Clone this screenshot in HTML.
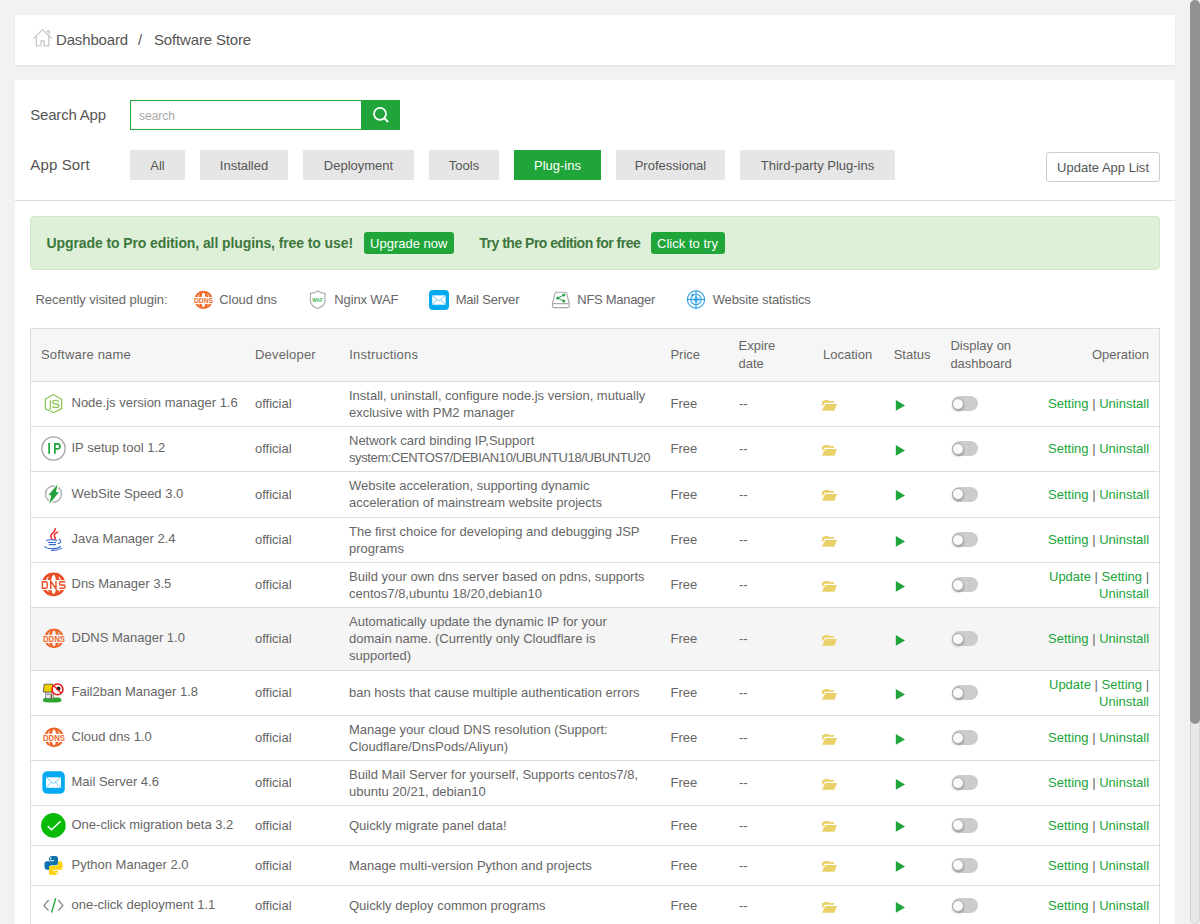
<!DOCTYPE html><html><head><meta charset="utf-8"><style>
html,body{margin:0;padding:0}
body{width:1200px;height:924px;overflow:hidden;background:#f2f2f2;position:relative;font-family:"Liberation Sans",sans-serif}
.t{position:absolute;white-space:nowrap}
.r{position:absolute;box-sizing:border-box}
.i{position:absolute;overflow:visible}
</style></head><body>
<div class="r" style="left:15px;top:15px;width:1160px;height:50px;background:#fff;box-shadow:0 1px 2px rgba(0,0,0,0.08)"></div>
<svg class="i" style="left:28px;top:24px" width="30" height="30" viewBox="0 0 30 30"><g fill="none" stroke="#c8c8c8" stroke-width="1.3" stroke-linejoin="round"><path d="M5.4 14.6 L14.4 5.6 L23.9 14.6"/><path d="M8.4 12 V21.8 H13 V17 H16.2 V21.8 H20.8 V12"/><path d="M19.2 8.6 V6.8 H21.2 V10.6"/></g></svg>
<div class="t" style="left:56.0px;top:29.80px;font-size:15px;line-height:20px;color:#555;letter-spacing:-0.153px;">Dashboard</div>
<div class="t" style="left:138.0px;top:29.80px;font-size:15px;line-height:20px;color:#555;">/</div>
<div class="t" style="left:154.0px;top:29.80px;font-size:15px;line-height:20px;color:#555;letter-spacing:-0.158px;">Software Store</div>
<div class="r" style="left:15px;top:80px;width:1160px;height:860px;background:#fff"></div>
<div class="t" style="left:30.3px;top:104.80px;font-size:15px;line-height:20px;color:#555;letter-spacing:-0.205px;">Search App</div>
<div class="r" style="left:130px;top:100px;width:232px;height:30px;border:1px solid #20a53a;border-right:none;background:#fff"></div>
<div class="t" style="left:139.0px;top:107.84px;font-size:12px;line-height:16px;color:#aaa;letter-spacing:-0.003px;">search</div>
<div class="r" style="left:361px;top:100px;width:39px;height:30px;background:#20a53a"></div>
<svg class="i" style="left:361px;top:100px" width="39" height="30" viewBox="0 0 39 30"><g fill="none" stroke="#fff" stroke-width="1.8"><circle cx="19" cy="13.8" r="6"/><path d="M23.2 18 L27.2 22" stroke-linecap="butt"/></g></svg>
<div class="t" style="left:30.3px;top:154.80px;font-size:15px;line-height:20px;color:#555;letter-spacing:0.142px;">App Sort</div>
<div class="r" style="left:130px;top:150px;width:55px;height:30px;background:#e6e6e6"></div>
<div class="t" style="left:150.3px;top:156.60px;font-size:13px;line-height:17px;color:#555;">All</div>
<div class="r" style="left:200px;top:150px;width:88px;height:30px;background:#e6e6e6"></div>
<div class="t" style="left:219.8px;top:156.60px;font-size:13px;line-height:17px;color:#555;">Installed</div>
<div class="r" style="left:303px;top:150px;width:111px;height:30px;background:#e6e6e6"></div>
<div class="t" style="left:323.8px;top:156.60px;font-size:13px;line-height:17px;color:#555;">Deployment</div>
<div class="r" style="left:429px;top:150px;width:70px;height:30px;background:#e6e6e6"></div>
<div class="t" style="left:448.8px;top:156.60px;font-size:13px;line-height:17px;color:#555;">Tools</div>
<div class="r" style="left:514px;top:150px;width:87px;height:30px;background:#20a53a"></div>
<div class="t" style="left:534.0px;top:156.60px;font-size:13px;line-height:17px;color:#fff;">Plug-ins</div>
<div class="r" style="left:616px;top:150px;width:109px;height:30px;background:#e6e6e6"></div>
<div class="t" style="left:634.7px;top:156.60px;font-size:13px;line-height:17px;color:#555;">Professional</div>
<div class="r" style="left:740px;top:150px;width:155px;height:30px;background:#e6e6e6"></div>
<div class="t" style="left:760.8px;top:156.60px;font-size:13px;line-height:17px;color:#555;">Third-party Plug-ins</div>
<div class="r" style="left:1046px;top:152px;width:114px;height:30px;border:1px solid #ccc;border-radius:3px;background:#fff"></div>
<div class="t" style="left:1057.0px;top:158.50px;font-size:13px;line-height:17px;color:#555;letter-spacing:0.015px;">Update App List</div>
<div class="r" style="left:15px;top:200px;width:1160px;height:1px;background:#ddd"></div>
<div class="r" style="left:30px;top:216px;width:1130px;height:54px;background:#dff0d8;border:1px solid #d0e9c6;border-radius:4px"></div>
<div class="t" style="left:46.5px;top:233.65px;font-size:14px;line-height:18px;color:#3c763d;font-weight:bold;letter-spacing:-0.094px;">Upgrade to Pro edition, all plugins, free to use!</div>
<div class="r" style="left:364px;top:232px;width:90px;height:22px;background:#20a53a;border-radius:3px"></div>
<div class="t" style="left:370.0px;top:234.50px;font-size:13px;line-height:17px;color:#fff;letter-spacing:0.016px;">Upgrade now</div>
<div class="t" style="left:479.3px;top:233.65px;font-size:14px;line-height:18px;color:#3c763d;font-weight:bold;letter-spacing:-0.501px;">Try the Pro edition for free</div>
<div class="r" style="left:651px;top:232px;width:74px;height:22px;background:#20a53a;border-radius:3px"></div>
<div class="t" style="left:657.0px;top:234.50px;font-size:13px;line-height:17px;color:#fff;letter-spacing:0.028px;">Click to try</div>
<div class="t" style="left:35.5px;top:291.20px;font-size:13px;line-height:17px;color:#666;letter-spacing:-0.040px;">Recently visited plugin:</div>
<div class="t" style="left:219.3px;top:291.20px;font-size:13px;line-height:17px;color:#666;letter-spacing:-0.093px;">Cloud dns</div>
<div class="t" style="left:334.3px;top:291.20px;font-size:13px;line-height:17px;color:#666;letter-spacing:-0.139px;">Nginx WAF</div>
<div class="t" style="left:455.7px;top:291.20px;font-size:13px;line-height:17px;color:#666;letter-spacing:-0.194px;">Mail Server</div>
<div class="t" style="left:577.3px;top:291.20px;font-size:13px;line-height:17px;color:#666;letter-spacing:-0.292px;">NFS Manager</div>
<div class="t" style="left:712.7px;top:291.20px;font-size:13px;line-height:17px;color:#666;letter-spacing:-0.121px;">Website statistics</div>
<svg class="i" style="left:188px;top:285px" width="30" height="30" viewBox="0 0 30 30"><defs><mask id="mddns3"><rect width="30" height="30" fill="#fff"/>
<ellipse cx="15.5" cy="14.9" rx="5.64" ry="9.28" fill="none" stroke="#000" stroke-width="0.91"/>
<ellipse cx="15.5" cy="14.9" rx="2.00" ry="7.64" fill="#000"/>
<rect x="0" y="11.9" width="30" height="6.999999999999998" fill="#000"/></mask></defs>
<circle cx="15.5" cy="14.9" r="9.1" fill="#f06a2a" mask="url(#mddns3)"/><clipPath id="kddns3"><rect x="0" y="0" width="30" height="11.9"/><rect x="0" y="18.9" width="30" height="30"/></clipPath><circle cx="15.5" cy="14.9" r="8.19" fill="none" stroke="#f06a2a" stroke-width="1.82" clip-path="url(#kddns3)"/><text x="15.5" y="18.1" text-anchor="middle" font-family="Liberation Sans" font-weight="bold" font-size="7.4" fill="#f06a2a" textLength="19.2" lengthAdjust="spacingAndGlyphs">DDNS</text></svg>
<svg class="i" style="left:303px;top:285px" width="30" height="30" viewBox="0 0 30 30"><path d="M14.7 6 Q11 8.4 7.4 8.4 V15.5 Q7.4 21 14.7 23.4 Q22 21 22 15.5 V8.4 Q18.4 8.4 14.7 6 Z" fill="none" stroke="#a8a8a8" stroke-width="1.1"/><text x="14.6" y="17" text-anchor="middle" font-family="Liberation Sans" font-weight="bold" font-size="5.2" fill="#3cb55a" textLength="10.5" lengthAdjust="spacingAndGlyphs">WAF</text></svg>
<svg class="i" style="left:424px;top:285px" width="30" height="30" viewBox="0 0 30 30"><rect x="5" y="5" width="20" height="20" rx="4" fill="#03a9f1"/><rect x="8.21" y="10.36" width="13.39" height="9.38" fill="#fff"/><path d="M8.21 10.36 L14.91 15.89 L21.61 10.36 M8.21 19.73 L13.04 14.64 M21.61 19.73 L16.79 14.64" fill="none" stroke="#3ab6ee" stroke-width="0.7"/></svg>
<svg class="i" style="left:546px;top:285px" width="30" height="30" viewBox="0 0 30 30"><g fill="none" stroke="#a8a8a8" stroke-width="1.1"><path d="M6.4 19 L9 8.2 Q9.2 7.3 10.2 7.3 H19.4 Q20.4 7.3 20.6 8.2 L23.4 19"/><rect x="6.4" y="18.6" width="17" height="4" rx="1.6"/></g><g fill="#2ea44a"><circle cx="11.8" cy="13" r="1.6"/><circle cx="17.8" cy="10" r="1.6"/><circle cx="17.8" cy="16" r="1.6"/></g><path d="M11.8 13 L17.8 10 M11.8 13 L17.8 16" stroke="#2ea44a" stroke-width="1"/></svg>
<svg class="i" style="left:681px;top:285px" width="30" height="30" viewBox="0 0 30 30"><g fill="none" stroke="#2a9ee4" stroke-width="1.1"><circle cx="15" cy="14.5" r="8.6"/><circle cx="15" cy="14.5" r="5.2"/><path d="M15 5.5 V23.5 M7 14.5 H23"/></g><path d="M15 11 L19.6 14.5 L15 18 L11.6 14.5 Z" fill="#2a9ee4" opacity="0.6"/><circle cx="11.6" cy="10" r="1.3" fill="#2a9ee4"/></svg>
<div class="r" style="left:30px;top:328px;width:1130px;height:54px;background:#f6f6f6;border:1px solid #ddd;border-bottom:1px solid #ddd"></div>
<div class="t" style="left:41.0px;top:346.00px;font-size:13px;line-height:17px;color:#666;letter-spacing:0.198px;">Software name</div>
<div class="t" style="left:255.0px;top:346.00px;font-size:13px;line-height:17px;color:#666;letter-spacing:0.172px;">Developer</div>
<div class="t" style="left:349.2px;top:346.00px;font-size:13px;line-height:17px;color:#666;letter-spacing:0.211px;">Instructions</div>
<div class="t" style="left:670.4px;top:346.00px;font-size:13px;line-height:17px;color:#666;">Price</div>
<div class="t" style="left:738.5px;top:337.00px;font-size:13px;line-height:17px;color:#666;">Expire</div>
<div class="t" style="left:738.5px;top:354.50px;font-size:13px;line-height:17px;color:#666;">date</div>
<div class="t" style="left:823.0px;top:346.00px;font-size:13px;line-height:17px;color:#666;">Location</div>
<div class="t" style="left:893.7px;top:346.00px;font-size:13px;line-height:17px;color:#666;">Status</div>
<div class="t" style="left:950.4px;top:337.00px;font-size:13px;line-height:17px;color:#666;">Display on</div>
<div class="t" style="left:950.4px;top:354.50px;font-size:13px;line-height:17px;color:#666;">dashboard</div>
<div class="t" style="left:1091.9px;top:346.00px;font-size:13px;line-height:17px;color:#666;">Operation</div>
<div style="position:absolute;left:0;top:0;width:1200px;height:924px;overflow:hidden">
<div class="r" style="left:30px;top:382px;width:1130px;height:45px;background:#fff;border-left:1px solid #ddd;border-right:1px solid #ddd;border-bottom:1px solid #ddd"></div>
<svg class="i" style="left:38px;top:388px" width="30" height="30" viewBox="0 0 30 30"><g fill="none" stroke="#80bd41" stroke-width="1.1"><path d="M12.6 23 L15.4 24.7 L23.7 20.6 V11.2 L15.4 6.6 L7.3 11 V20.6 L9.6 22"/><path d="M12.3 12.2 V20.6 Q12.3 22.6 10.2 22.3 L9.6 22"/><path d="M20.7 14 Q20.3 12.3 17.6 12.3 Q14.6 12.3 14.6 14 Q14.6 15.6 17.6 15.9 Q21 16.2 21 17.8 Q21 19.6 17.6 19.6 Q14.8 19.6 14.3 17.8"/></g></svg>
<div class="t" style="left:71.5px;top:394.00px;font-size:13px;line-height:17px;color:#666;">Node.js version manager 1.6</div>
<div class="t" style="left:255.0px;top:395.00px;font-size:13px;line-height:17px;color:#666;">official</div>
<div class="t" style="left:349.0px;top:386.70px;font-size:13px;line-height:17px;color:#666;">Install, uninstall, configure node.js version, mutually</div>
<div class="t" style="left:349.0px;top:403.70px;font-size:13px;line-height:17px;color:#666;">exclusive with PM2 manager</div>
<div class="t" style="left:670.5px;top:395.00px;font-size:13px;line-height:17px;color:#666;">Free</div>
<div class="t" style="left:739.0px;top:395.00px;font-size:13px;line-height:17px;color:#666;">--</div>
<svg class="i" style="left:815px;top:390px" width="30" height="30" viewBox="0 0 30 30"><path d="M7 11 H9.1 L9.6 10 H13.8 L14.3 11 H19 V12.7 H10 L7.2 16.6 Z" fill="#ead069"/><path d="M10.2 14 H22 L19.4 20.8 H7 Z" fill="#ead069"/></svg>
<svg class="i" style="left:885px;top:390px" width="30" height="30" viewBox="0 0 30 30"><path d="M10.8 10 V20.8 L20 15.4 Z" fill="#20a53a"/></svg>
<div class="r" style="left:952px;top:396.0px;width:26px;height:15px;background:#ccc;border-radius:8px"></div>
<div class="r" style="left:952.3px;top:397.6px;width:12px;height:12px;border-radius:50%;background:#fafafa;border:1px solid #aaa;box-shadow:0 1.5px 2px rgba(0,0,0,0.25)"></div>
<div class="t" style="left:1048.1px;top:395.00px;font-size:13px;line-height:17px;color:#20a53a;">Setting <span style="color:#666">|</span> Uninstall</div>
<div class="r" style="left:30px;top:427px;width:1130px;height:45px;background:#fff;border-left:1px solid #ddd;border-right:1px solid #ddd;border-bottom:1px solid #ddd"></div>
<svg class="i" style="left:38px;top:433px" width="30" height="30" viewBox="0 0 30 30"><circle cx="15.5" cy="15.5" r="11.6" fill="none" stroke="#a0a0a0" stroke-width="1.3"/><rect x="10.3" y="10" width="1.7" height="10.8" fill="#20a53a"/><path d="M16.9 20.8 V10.8 H19.4 Q22 10.8 22 13.3 Q22 15.8 19.4 15.8 H16.9" fill="none" stroke="#20a53a" stroke-width="1.7"/></svg>
<div class="t" style="left:71.5px;top:439.00px;font-size:13px;line-height:17px;color:#666;">IP setup tool 1.2</div>
<div class="t" style="left:255.0px;top:440.00px;font-size:13px;line-height:17px;color:#666;">official</div>
<div class="t" style="left:349.0px;top:431.70px;font-size:13px;line-height:17px;color:#666;">Network card binding IP,Support</div>
<div class="t" style="left:349.0px;top:448.70px;font-size:13px;line-height:17px;color:#666;letter-spacing:-0.388px;">system:CENTOS7/DEBIAN10/UBUNTU18/UBUNTU20</div>
<div class="t" style="left:670.5px;top:440.00px;font-size:13px;line-height:17px;color:#666;">Free</div>
<div class="t" style="left:739.0px;top:440.00px;font-size:13px;line-height:17px;color:#666;">--</div>
<svg class="i" style="left:815px;top:435px" width="30" height="30" viewBox="0 0 30 30"><path d="M7 11 H9.1 L9.6 10 H13.8 L14.3 11 H19 V12.7 H10 L7.2 16.6 Z" fill="#ead069"/><path d="M10.2 14 H22 L19.4 20.8 H7 Z" fill="#ead069"/></svg>
<svg class="i" style="left:885px;top:435px" width="30" height="30" viewBox="0 0 30 30"><path d="M10.8 10 V20.8 L20 15.4 Z" fill="#20a53a"/></svg>
<div class="r" style="left:952px;top:441.0px;width:26px;height:15px;background:#ccc;border-radius:8px"></div>
<div class="r" style="left:952.3px;top:442.6px;width:12px;height:12px;border-radius:50%;background:#fafafa;border:1px solid #aaa;box-shadow:0 1.5px 2px rgba(0,0,0,0.25)"></div>
<div class="t" style="left:1048.1px;top:440.00px;font-size:13px;line-height:17px;color:#20a53a;">Setting <span style="color:#666">|</span> Uninstall</div>
<div class="r" style="left:30px;top:472px;width:1130px;height:46px;background:#fff;border-left:1px solid #ddd;border-right:1px solid #ddd;border-bottom:1px solid #ddd"></div>
<svg class="i" style="left:38px;top:479px" width="30" height="30" viewBox="0 0 30 30"><circle cx="15.5" cy="15" r="8" fill="none" stroke="#b0b0b0" stroke-width="1.4"/><path d="M19.5 5.6 L10.4 16 L13.3 16.4 L11.3 25 L21 13.3 L18 13 Z" fill="#fff" stroke="#fff" stroke-width="2.2" stroke-linejoin="round"/><path d="M19.5 5.6 L10.4 16 L13.3 16.4 L11.3 25 L21 13.3 L18 13 Z" fill="#26a03a"/></svg>
<div class="t" style="left:71.5px;top:484.50px;font-size:13px;line-height:17px;color:#666;">WebSite Speed 3.0</div>
<div class="t" style="left:255.0px;top:485.50px;font-size:13px;line-height:17px;color:#666;">official</div>
<div class="t" style="left:349.0px;top:477.20px;font-size:13px;line-height:17px;color:#666;">Website acceleration, supporting dynamic</div>
<div class="t" style="left:349.0px;top:494.20px;font-size:13px;line-height:17px;color:#666;">acceleration of mainstream website projects</div>
<div class="t" style="left:670.5px;top:485.50px;font-size:13px;line-height:17px;color:#666;">Free</div>
<div class="t" style="left:739.0px;top:485.50px;font-size:13px;line-height:17px;color:#666;">--</div>
<svg class="i" style="left:815px;top:480px" width="30" height="30" viewBox="0 0 30 30"><path d="M7 11 H9.1 L9.6 10 H13.8 L14.3 11 H19 V12.7 H10 L7.2 16.6 Z" fill="#ead069"/><path d="M10.2 14 H22 L19.4 20.8 H7 Z" fill="#ead069"/></svg>
<svg class="i" style="left:885px;top:480px" width="30" height="30" viewBox="0 0 30 30"><path d="M10.8 10 V20.8 L20 15.4 Z" fill="#20a53a"/></svg>
<div class="r" style="left:952px;top:486.5px;width:26px;height:15px;background:#ccc;border-radius:8px"></div>
<div class="r" style="left:952.3px;top:488.1px;width:12px;height:12px;border-radius:50%;background:#fafafa;border:1px solid #aaa;box-shadow:0 1.5px 2px rgba(0,0,0,0.25)"></div>
<div class="t" style="left:1048.1px;top:485.50px;font-size:13px;line-height:17px;color:#20a53a;">Setting <span style="color:#666">|</span> Uninstall</div>
<div class="r" style="left:30px;top:518px;width:1130px;height:45px;background:#fff;border-left:1px solid #ddd;border-right:1px solid #ddd;border-bottom:1px solid #ddd"></div>
<svg class="i" style="left:38px;top:524px" width="30" height="30" viewBox="0 0 30 30"><g fill="none" stroke="#ee1c1c" stroke-width="1.4" stroke-linecap="round"><path d="M17.3 4.8 Q17 7.4 14.2 9.6 Q12 11.6 13.2 13.6 Q14 14.6 14.3 15.2"/><path d="M19.6 8.2 Q17.2 9 16.4 10.8 Q16 12.4 17.2 13.8 Q17.6 14.8 16.8 15.6"/></g><g fill="none" stroke="#3468c8" stroke-width="1.1" stroke-linecap="round"><path d="M8.4 16.4 Q12 15.2 18.8 16.4"/><path d="M10.4 18.5 H17.8"/><path d="M11.3 20.6 H17.6"/><path d="M21.2 15.4 Q23.4 16.4 22 18.6 Q21.2 19.4 20.2 19.6"/><path d="M6.8 22.4 Q8 24.6 15 24.6 Q21 24.6 22.4 22.4"/><path d="M13.6 26.4 Q20 26.6 23.6 24.4"/></g></svg>
<div class="t" style="left:71.5px;top:530.00px;font-size:13px;line-height:17px;color:#666;">Java Manager 2.4</div>
<div class="t" style="left:255.0px;top:531.00px;font-size:13px;line-height:17px;color:#666;">official</div>
<div class="t" style="left:349.0px;top:522.70px;font-size:13px;line-height:17px;color:#666;">The first choice for developing and debugging JSP</div>
<div class="t" style="left:349.0px;top:539.70px;font-size:13px;line-height:17px;color:#666;">programs</div>
<div class="t" style="left:670.5px;top:531.00px;font-size:13px;line-height:17px;color:#666;">Free</div>
<div class="t" style="left:739.0px;top:531.00px;font-size:13px;line-height:17px;color:#666;">--</div>
<svg class="i" style="left:815px;top:526px" width="30" height="30" viewBox="0 0 30 30"><path d="M7 11 H9.1 L9.6 10 H13.8 L14.3 11 H19 V12.7 H10 L7.2 16.6 Z" fill="#ead069"/><path d="M10.2 14 H22 L19.4 20.8 H7 Z" fill="#ead069"/></svg>
<svg class="i" style="left:885px;top:526px" width="30" height="30" viewBox="0 0 30 30"><path d="M10.8 10 V20.8 L20 15.4 Z" fill="#20a53a"/></svg>
<div class="r" style="left:952px;top:532.0px;width:26px;height:15px;background:#ccc;border-radius:8px"></div>
<div class="r" style="left:952.3px;top:533.6px;width:12px;height:12px;border-radius:50%;background:#fafafa;border:1px solid #aaa;box-shadow:0 1.5px 2px rgba(0,0,0,0.25)"></div>
<div class="t" style="left:1048.1px;top:531.00px;font-size:13px;line-height:17px;color:#20a53a;">Setting <span style="color:#666">|</span> Uninstall</div>
<div class="r" style="left:30px;top:563px;width:1130px;height:45px;background:#fff;border-left:1px solid #ddd;border-right:1px solid #ddd;border-bottom:1px solid #ddd"></div>
<svg class="i" style="left:38px;top:569px" width="30" height="30" viewBox="0 0 30 30"><defs><mask id="mdns"><rect width="30" height="30" fill="#fff"/>
<ellipse cx="15.6" cy="15.4" rx="7.32" ry="12.04" fill="none" stroke="#000" stroke-width="1.18"/>
<ellipse cx="15.6" cy="15.4" rx="2.60" ry="9.91" fill="#000"/>
<rect x="0" y="10.9" width="30" height="10.299999999999999" fill="#000"/></mask></defs>
<circle cx="15.6" cy="15.4" r="11.8" fill="#ea4e24" mask="url(#mdns)"/><clipPath id="kdns"><rect x="0" y="0" width="30" height="10.9"/><rect x="0" y="21.2" width="30" height="30"/></clipPath><circle cx="15.6" cy="15.4" r="10.62" fill="none" stroke="#ea4e24" stroke-width="2.36" clip-path="url(#kdns)"/><g fill="none" stroke="#ea4e24" stroke-width="1.4"><path d="M4.4 12.8 H7.9 Q9.2 12.8 9.2 14.1 V17.9 Q9.2 19.2 7.9 19.2 H4.4 Z"/><path d="M12.7 19.9 V12 L18 19.9 V12"/><path d="M27.2 12.8 H22.7 Q21.5 12.8 21.5 14 V14.8 Q21.5 16 22.7 16 H25.9 Q27.1 16 27.1 17.2 V18 Q27.1 19.2 25.9 19.2 H21.4"/></g></svg>
<div class="t" style="left:71.5px;top:575.00px;font-size:13px;line-height:17px;color:#666;">Dns Manager 3.5</div>
<div class="t" style="left:255.0px;top:576.00px;font-size:13px;line-height:17px;color:#666;">official</div>
<div class="t" style="left:349.0px;top:567.70px;font-size:13px;line-height:17px;color:#666;">Build your own dns server based on pdns, supports</div>
<div class="t" style="left:349.0px;top:584.70px;font-size:13px;line-height:17px;color:#666;">centos7/8,ubuntu 18/20,debian10</div>
<div class="t" style="left:670.5px;top:576.00px;font-size:13px;line-height:17px;color:#666;">Free</div>
<div class="t" style="left:739.0px;top:576.00px;font-size:13px;line-height:17px;color:#666;">--</div>
<svg class="i" style="left:815px;top:571px" width="30" height="30" viewBox="0 0 30 30"><path d="M7 11 H9.1 L9.6 10 H13.8 L14.3 11 H19 V12.7 H10 L7.2 16.6 Z" fill="#ead069"/><path d="M10.2 14 H22 L19.4 20.8 H7 Z" fill="#ead069"/></svg>
<svg class="i" style="left:885px;top:571px" width="30" height="30" viewBox="0 0 30 30"><path d="M10.8 10 V20.8 L20 15.4 Z" fill="#20a53a"/></svg>
<div class="r" style="left:952px;top:577.0px;width:26px;height:15px;background:#ccc;border-radius:8px"></div>
<div class="r" style="left:952.3px;top:578.6px;width:12px;height:12px;border-radius:50%;background:#fafafa;border:1px solid #aaa;box-shadow:0 1.5px 2px rgba(0,0,0,0.25)"></div>
<div class="t" style="left:1049.0px;top:567.50px;font-size:13px;line-height:17px;color:#20a53a;">Update <span style="color:#666">|</span> Setting <span style="color:#666">|</span></div>
<div class="t" style="left:1099.1px;top:584.50px;font-size:13px;line-height:17px;color:#20a53a;">Uninstall</div>
<div class="r" style="left:30px;top:608px;width:1130px;height:63px;background:#f5f5f5;border-left:1px solid #ddd;border-right:1px solid #ddd;border-bottom:1px solid #ddd"></div>
<svg class="i" style="left:38px;top:623px" width="30" height="30" viewBox="0 0 30 30"><defs><mask id="mddns"><rect width="30" height="30" fill="#fff"/>
<ellipse cx="16" cy="15.4" rx="6.08" ry="10.00" fill="none" stroke="#000" stroke-width="0.98"/>
<ellipse cx="16" cy="15.4" rx="2.16" ry="8.23" fill="#000"/>
<rect x="0" y="11.7" width="30" height="8.3" fill="#000"/></mask></defs>
<circle cx="16" cy="15.4" r="9.8" fill="#f0682a" mask="url(#mddns)"/><clipPath id="kddns"><rect x="0" y="0" width="30" height="11.7"/><rect x="0" y="20.0" width="30" height="30"/></clipPath><circle cx="16" cy="15.4" r="8.82" fill="none" stroke="#f0682a" stroke-width="1.96" clip-path="url(#kddns)"/><text x="16" y="19.1" text-anchor="middle" font-family="Liberation Sans" font-weight="bold" font-size="8.2" fill="#f0682a" textLength="22" lengthAdjust="spacingAndGlyphs">DDNS</text></svg>
<div class="t" style="left:71.5px;top:629.00px;font-size:13px;line-height:17px;color:#666;">DDNS Manager 1.0</div>
<div class="t" style="left:255.0px;top:630.00px;font-size:13px;line-height:17px;color:#666;">official</div>
<div class="t" style="left:349.0px;top:613.20px;font-size:13px;line-height:17px;color:#666;">Automatically update the dynamic IP for your</div>
<div class="t" style="left:349.0px;top:630.20px;font-size:13px;line-height:17px;color:#666;">domain name. (Currently only Cloudflare is</div>
<div class="t" style="left:349.0px;top:647.20px;font-size:13px;line-height:17px;color:#666;">supported)</div>
<div class="t" style="left:670.5px;top:630.00px;font-size:13px;line-height:17px;color:#666;">Free</div>
<div class="t" style="left:739.0px;top:630.00px;font-size:13px;line-height:17px;color:#666;">--</div>
<svg class="i" style="left:815px;top:625px" width="30" height="30" viewBox="0 0 30 30"><path d="M7 11 H9.1 L9.6 10 H13.8 L14.3 11 H19 V12.7 H10 L7.2 16.6 Z" fill="#ead069"/><path d="M10.2 14 H22 L19.4 20.8 H7 Z" fill="#ead069"/></svg>
<svg class="i" style="left:885px;top:625px" width="30" height="30" viewBox="0 0 30 30"><path d="M10.8 10 V20.8 L20 15.4 Z" fill="#20a53a"/></svg>
<div class="r" style="left:952px;top:631.0px;width:26px;height:15px;background:#ccc;border-radius:8px"></div>
<div class="r" style="left:952.3px;top:632.6px;width:12px;height:12px;border-radius:50%;background:#fafafa;border:1px solid #aaa;box-shadow:0 1.5px 2px rgba(0,0,0,0.25)"></div>
<div class="t" style="left:1048.1px;top:630.00px;font-size:13px;line-height:17px;color:#20a53a;">Setting <span style="color:#666">|</span> Uninstall</div>
<div class="r" style="left:30px;top:671px;width:1130px;height:45px;background:#fff;border-left:1px solid #ddd;border-right:1px solid #ddd;border-bottom:1px solid #ddd"></div>
<svg class="i" style="left:38px;top:677px" width="30" height="30" viewBox="0 0 30 30"><path d="M4.8 24 Q5.5 20.6 8 20.6 H20.5 Q23.2 20.6 23.6 24 Q22 25.6 14 25.6 Q6 25.6 4.8 24 Z" fill="#2fa52f"/><rect x="7.6" y="14.8" width="7.6" height="6.8" fill="#e4e4f0" stroke="#555" stroke-width="0.6"/><rect x="12.6" y="16.5" width="1.6" height="5" fill="#8a5a2a"/><rect x="8.6" y="16.4" width="3" height="1.6" fill="#999"/><path d="M5.3 15 L6.2 7.2 H14.8 V15 Z" fill="#f4cf00" stroke="#333" stroke-width="0.7"/><circle cx="19.5" cy="12.4" r="5.4" fill="#fff" stroke="#ee1111" stroke-width="1.5"/><circle cx="20.4" cy="11.6" r="2.1" fill="#222"/><path d="M15.9 8.9 L23.1 15.9" stroke="#ee1111" stroke-width="1.3"/></svg>
<div class="t" style="left:71.5px;top:683.00px;font-size:13px;line-height:17px;color:#666;">Fail2ban Manager 1.8</div>
<div class="t" style="left:255.0px;top:684.00px;font-size:13px;line-height:17px;color:#666;">official</div>
<div class="t" style="left:349.0px;top:684.20px;font-size:13px;line-height:17px;color:#666;">ban hosts that cause multiple authentication errors</div>
<div class="t" style="left:670.5px;top:684.00px;font-size:13px;line-height:17px;color:#666;">Free</div>
<div class="t" style="left:739.0px;top:684.00px;font-size:13px;line-height:17px;color:#666;">--</div>
<svg class="i" style="left:815px;top:679px" width="30" height="30" viewBox="0 0 30 30"><path d="M7 11 H9.1 L9.6 10 H13.8 L14.3 11 H19 V12.7 H10 L7.2 16.6 Z" fill="#ead069"/><path d="M10.2 14 H22 L19.4 20.8 H7 Z" fill="#ead069"/></svg>
<svg class="i" style="left:885px;top:679px" width="30" height="30" viewBox="0 0 30 30"><path d="M10.8 10 V20.8 L20 15.4 Z" fill="#20a53a"/></svg>
<div class="r" style="left:952px;top:685.0px;width:26px;height:15px;background:#ccc;border-radius:8px"></div>
<div class="r" style="left:952.3px;top:686.6px;width:12px;height:12px;border-radius:50%;background:#fafafa;border:1px solid #aaa;box-shadow:0 1.5px 2px rgba(0,0,0,0.25)"></div>
<div class="t" style="left:1049.0px;top:675.50px;font-size:13px;line-height:17px;color:#20a53a;">Update <span style="color:#666">|</span> Setting <span style="color:#666">|</span></div>
<div class="t" style="left:1099.1px;top:692.50px;font-size:13px;line-height:17px;color:#20a53a;">Uninstall</div>
<div class="r" style="left:30px;top:716px;width:1130px;height:45px;background:#fff;border-left:1px solid #ddd;border-right:1px solid #ddd;border-bottom:1px solid #ddd"></div>
<svg class="i" style="left:38px;top:722px" width="30" height="30" viewBox="0 0 30 30"><defs><mask id="mddns2"><rect width="30" height="30" fill="#fff"/>
<ellipse cx="16" cy="15.4" rx="6.08" ry="10.00" fill="none" stroke="#000" stroke-width="0.98"/>
<ellipse cx="16" cy="15.4" rx="2.16" ry="8.23" fill="#000"/>
<rect x="0" y="11.7" width="30" height="8.3" fill="#000"/></mask></defs>
<circle cx="16" cy="15.4" r="9.8" fill="#f0682a" mask="url(#mddns2)"/><clipPath id="kddns2"><rect x="0" y="0" width="30" height="11.7"/><rect x="0" y="20.0" width="30" height="30"/></clipPath><circle cx="16" cy="15.4" r="8.82" fill="none" stroke="#f0682a" stroke-width="1.96" clip-path="url(#kddns2)"/><text x="16" y="19.1" text-anchor="middle" font-family="Liberation Sans" font-weight="bold" font-size="8.2" fill="#f0682a" textLength="22" lengthAdjust="spacingAndGlyphs">DDNS</text></svg>
<div class="t" style="left:71.5px;top:728.00px;font-size:13px;line-height:17px;color:#666;">Cloud dns 1.0</div>
<div class="t" style="left:255.0px;top:729.00px;font-size:13px;line-height:17px;color:#666;">official</div>
<div class="t" style="left:349.0px;top:720.70px;font-size:13px;line-height:17px;color:#666;">Manage your cloud DNS resolution (Support:</div>
<div class="t" style="left:349.0px;top:737.70px;font-size:13px;line-height:17px;color:#666;">Cloudflare/DnsPods/Aliyun)</div>
<div class="t" style="left:670.5px;top:729.00px;font-size:13px;line-height:17px;color:#666;">Free</div>
<div class="t" style="left:739.0px;top:729.00px;font-size:13px;line-height:17px;color:#666;">--</div>
<svg class="i" style="left:815px;top:724px" width="30" height="30" viewBox="0 0 30 30"><path d="M7 11 H9.1 L9.6 10 H13.8 L14.3 11 H19 V12.7 H10 L7.2 16.6 Z" fill="#ead069"/><path d="M10.2 14 H22 L19.4 20.8 H7 Z" fill="#ead069"/></svg>
<svg class="i" style="left:885px;top:724px" width="30" height="30" viewBox="0 0 30 30"><path d="M10.8 10 V20.8 L20 15.4 Z" fill="#20a53a"/></svg>
<div class="r" style="left:952px;top:730.0px;width:26px;height:15px;background:#ccc;border-radius:8px"></div>
<div class="r" style="left:952.3px;top:731.6px;width:12px;height:12px;border-radius:50%;background:#fafafa;border:1px solid #aaa;box-shadow:0 1.5px 2px rgba(0,0,0,0.25)"></div>
<div class="t" style="left:1048.1px;top:729.00px;font-size:13px;line-height:17px;color:#20a53a;">Setting <span style="color:#666">|</span> Uninstall</div>
<div class="r" style="left:30px;top:761px;width:1130px;height:45px;background:#fff;border-left:1px solid #ddd;border-right:1px solid #ddd;border-bottom:1px solid #ddd"></div>
<svg class="i" style="left:38px;top:767px" width="30" height="30" viewBox="0 0 30 30"><rect x="4.4" y="4.3" width="22.4" height="22.4" rx="4.6" fill="#03a9f1"/><rect x="8.00" y="10.30" width="15.00" height="10.50" fill="#fff"/><path d="M8.00 10.30 L15.50 16.50 L23.00 10.30 M8.00 20.80 L13.40 15.10 M23.00 20.80 L17.60 15.10" fill="none" stroke="#3ab6ee" stroke-width="0.7"/></svg>
<div class="t" style="left:71.5px;top:773.00px;font-size:13px;line-height:17px;color:#666;">Mail Server 4.6</div>
<div class="t" style="left:255.0px;top:774.00px;font-size:13px;line-height:17px;color:#666;">official</div>
<div class="t" style="left:349.0px;top:765.70px;font-size:13px;line-height:17px;color:#666;">Build Mail Server for yourself, Supports centos7/8,</div>
<div class="t" style="left:349.0px;top:782.70px;font-size:13px;line-height:17px;color:#666;">ubuntu 20/21, debian10</div>
<div class="t" style="left:670.5px;top:774.00px;font-size:13px;line-height:17px;color:#666;">Free</div>
<div class="t" style="left:739.0px;top:774.00px;font-size:13px;line-height:17px;color:#666;">--</div>
<svg class="i" style="left:815px;top:769px" width="30" height="30" viewBox="0 0 30 30"><path d="M7 11 H9.1 L9.6 10 H13.8 L14.3 11 H19 V12.7 H10 L7.2 16.6 Z" fill="#ead069"/><path d="M10.2 14 H22 L19.4 20.8 H7 Z" fill="#ead069"/></svg>
<svg class="i" style="left:885px;top:769px" width="30" height="30" viewBox="0 0 30 30"><path d="M10.8 10 V20.8 L20 15.4 Z" fill="#20a53a"/></svg>
<div class="r" style="left:952px;top:775.0px;width:26px;height:15px;background:#ccc;border-radius:8px"></div>
<div class="r" style="left:952.3px;top:776.6px;width:12px;height:12px;border-radius:50%;background:#fafafa;border:1px solid #aaa;box-shadow:0 1.5px 2px rgba(0,0,0,0.25)"></div>
<div class="t" style="left:1048.1px;top:774.00px;font-size:13px;line-height:17px;color:#20a53a;">Setting <span style="color:#666">|</span> Uninstall</div>
<div class="r" style="left:30px;top:806px;width:1130px;height:40px;background:#fff;border-left:1px solid #ddd;border-right:1px solid #ddd;border-bottom:1px solid #ddd"></div>
<svg class="i" style="left:38px;top:810px" width="30" height="30" viewBox="0 0 30 30"><circle cx="15.4" cy="15.4" r="12.3" fill="#09bb07"/><path d="M9.8 16.2 L13.5 19.8 L22.6 11.2" fill="none" stroke="#fff" stroke-width="1.5"/></svg>
<div class="t" style="left:71.5px;top:815.50px;font-size:13px;line-height:17px;color:#666;">One-click migration beta 3.2</div>
<div class="t" style="left:255.0px;top:816.50px;font-size:13px;line-height:17px;color:#666;">official</div>
<div class="t" style="left:349.0px;top:816.70px;font-size:13px;line-height:17px;color:#666;">Quickly migrate panel data!</div>
<div class="t" style="left:670.5px;top:816.50px;font-size:13px;line-height:17px;color:#666;">Free</div>
<div class="t" style="left:739.0px;top:816.50px;font-size:13px;line-height:17px;color:#666;">--</div>
<svg class="i" style="left:815px;top:811px" width="30" height="30" viewBox="0 0 30 30"><path d="M7 11 H9.1 L9.6 10 H13.8 L14.3 11 H19 V12.7 H10 L7.2 16.6 Z" fill="#ead069"/><path d="M10.2 14 H22 L19.4 20.8 H7 Z" fill="#ead069"/></svg>
<svg class="i" style="left:885px;top:811px" width="30" height="30" viewBox="0 0 30 30"><path d="M10.8 10 V20.8 L20 15.4 Z" fill="#20a53a"/></svg>
<div class="r" style="left:952px;top:817.5px;width:26px;height:15px;background:#ccc;border-radius:8px"></div>
<div class="r" style="left:952.3px;top:819.1px;width:12px;height:12px;border-radius:50%;background:#fafafa;border:1px solid #aaa;box-shadow:0 1.5px 2px rgba(0,0,0,0.25)"></div>
<div class="t" style="left:1048.1px;top:816.50px;font-size:13px;line-height:17px;color:#20a53a;">Setting <span style="color:#666">|</span> Uninstall</div>
<div class="r" style="left:30px;top:846px;width:1130px;height:40px;background:#fff;border-left:1px solid #ddd;border-right:1px solid #ddd;border-bottom:1px solid #ddd"></div>
<svg class="i" style="left:38px;top:850px" width="30" height="30" viewBox="0 0 30 30"><path d="M14.6 6 H17.4 Q20 6 20 8.6 V13 Q20 15.2 17.8 15.2 H13.6 Q11 15.2 11 17.8 V19.8 H9.2 Q6.5 19.8 6.5 16.2 V13.6 Q6.5 11.2 9.2 11.2 H16.2 V10.2 H11 V8.6 Q11 6 14.6 6 Z" fill="#0d72ad"/><path d="M14.6 6 H17.4 Q20 6 20 8.6 V13 Q20 15.2 17.8 15.2 H13.6 Q11 15.2 11 17.8 V19.8 H9.2 Q6.5 19.8 6.5 16.2 V13.6 Q6.5 11.2 9.2 11.2 H16.2 V10.2 H11 V8.6 Q11 6 14.6 6 Z" fill="#ffd20f" transform="rotate(180 15.5 15.5)"/><circle cx="12.6" cy="8.3" r="0.9" fill="#fff"/><circle cx="18.4" cy="22.7" r="0.9" fill="#fff"/></svg>
<div class="t" style="left:71.5px;top:855.50px;font-size:13px;line-height:17px;color:#666;">Python Manager 2.0</div>
<div class="t" style="left:255.0px;top:856.50px;font-size:13px;line-height:17px;color:#666;">official</div>
<div class="t" style="left:349.0px;top:856.70px;font-size:13px;line-height:17px;color:#666;">Manage multi-version Python and projects</div>
<div class="t" style="left:670.5px;top:856.50px;font-size:13px;line-height:17px;color:#666;">Free</div>
<div class="t" style="left:739.0px;top:856.50px;font-size:13px;line-height:17px;color:#666;">--</div>
<svg class="i" style="left:815px;top:851px" width="30" height="30" viewBox="0 0 30 30"><path d="M7 11 H9.1 L9.6 10 H13.8 L14.3 11 H19 V12.7 H10 L7.2 16.6 Z" fill="#ead069"/><path d="M10.2 14 H22 L19.4 20.8 H7 Z" fill="#ead069"/></svg>
<svg class="i" style="left:885px;top:851px" width="30" height="30" viewBox="0 0 30 30"><path d="M10.8 10 V20.8 L20 15.4 Z" fill="#20a53a"/></svg>
<div class="r" style="left:952px;top:857.5px;width:26px;height:15px;background:#ccc;border-radius:8px"></div>
<div class="r" style="left:952.3px;top:859.1px;width:12px;height:12px;border-radius:50%;background:#fafafa;border:1px solid #aaa;box-shadow:0 1.5px 2px rgba(0,0,0,0.25)"></div>
<div class="t" style="left:1048.1px;top:856.50px;font-size:13px;line-height:17px;color:#20a53a;">Setting <span style="color:#666">|</span> Uninstall</div>
<div class="r" style="left:30px;top:886px;width:1130px;height:41px;background:#fff;border-left:1px solid #ddd;border-right:1px solid #ddd;border-bottom:1px solid #ddd"></div>
<svg class="i" style="left:38px;top:890px" width="30" height="30" viewBox="0 0 30 30"><g fill="none" stroke="#8a8a8a" stroke-width="1.4"><path d="M10.6 10 L6 15.4 L10.6 20.6"/><path d="M20.2 10 L24.8 15.4 L20.2 20.6"/></g><path d="M17.7 8.3 L13.6 22.6" stroke="#22a83a" stroke-width="1.4"/></svg>
<div class="t" style="left:71.5px;top:896.00px;font-size:13px;line-height:17px;color:#666;">one-click deployment 1.1</div>
<div class="t" style="left:255.0px;top:897.00px;font-size:13px;line-height:17px;color:#666;">official</div>
<div class="t" style="left:349.0px;top:897.20px;font-size:13px;line-height:17px;color:#666;">Quickly deploy common programs</div>
<div class="t" style="left:670.5px;top:897.00px;font-size:13px;line-height:17px;color:#666;">Free</div>
<div class="t" style="left:739.0px;top:897.00px;font-size:13px;line-height:17px;color:#666;">--</div>
<svg class="i" style="left:815px;top:892px" width="30" height="30" viewBox="0 0 30 30"><path d="M7 11 H9.1 L9.6 10 H13.8 L14.3 11 H19 V12.7 H10 L7.2 16.6 Z" fill="#ead069"/><path d="M10.2 14 H22 L19.4 20.8 H7 Z" fill="#ead069"/></svg>
<svg class="i" style="left:885px;top:892px" width="30" height="30" viewBox="0 0 30 30"><path d="M10.8 10 V20.8 L20 15.4 Z" fill="#20a53a"/></svg>
<div class="r" style="left:952px;top:898.0px;width:26px;height:15px;background:#ccc;border-radius:8px"></div>
<div class="r" style="left:952.3px;top:899.6px;width:12px;height:12px;border-radius:50%;background:#fafafa;border:1px solid #aaa;box-shadow:0 1.5px 2px rgba(0,0,0,0.25)"></div>
<div class="t" style="left:1048.1px;top:897.00px;font-size:13px;line-height:17px;color:#20a53a;">Setting <span style="color:#666">|</span> Uninstall</div>
</div>
<div class="r" style="left:1190px;top:0px;width:10px;height:924px;background:#e8e8e8;border-radius:5px;box-shadow:inset 1px 0 1px rgba(0,0,0,0.10),inset -1px 0 1px rgba(0,0,0,0.08)"></div>
<div class="r" style="left:1190px;top:0px;width:10px;height:724px;background:#929292;border-radius:5px"></div>
</body></html>
